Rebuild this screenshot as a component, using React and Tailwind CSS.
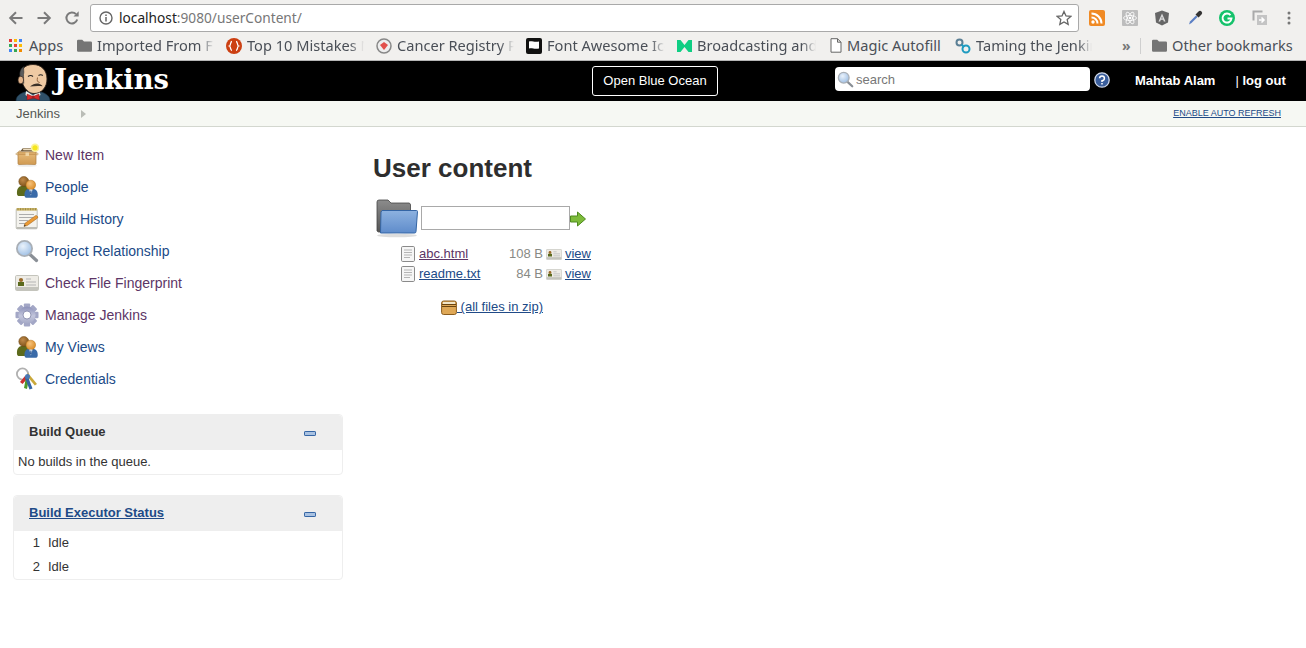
import React from "react";

const BLUE = "text-[#204a87]";
const PURPLE = "text-[#5c3566]";

function Back({ flip }) {
  return (
    <svg width="16" height="16" viewBox="0 0 16 16" className={flip ? "rotate-180" : ""}>
      <path d="M14.5 8H2.5M8 2.2L2.2 8 8 13.8" fill="none" stroke="#7a7a7a" strokeWidth="2" />
    </svg>
  );
}

function Reload() {
  return (
    <svg width="16" height="16" viewBox="0 0 16 16">
      <path d="M13.2 9.5A5.5 5.5 0 1 1 12 4.2" fill="none" stroke="#7a7a7a" strokeWidth="2" />
      <path d="M9.5 6.4h5.2V1.2z" fill="#7a7a7a" />
    </svg>
  );
}

function FolderMini() {
  return (
    <svg width="15" height="13" viewBox="0 0 15 13" className="shrink-0">
      <path d="M0 2a1.200 1.200 0 0 1 1.200-1.200h4L7 2.600h6.800A1.200 1.200 0 0 1 15 3.800v7.800a1.200 1.200 0 0 1-1.200 1.200H1.200A1.200 1.200 0 0 1 0 11.600z" fill="#757575" />
    </svg>
  );
}

function AppsGrid() {
  const c = ["#e53935", "#fbbc05", "#4285f4", "#34a853", "#ea4335", "#fbbc05", "#4285f4", "#34a853", "#f28b00"];
  return (
    <div className="grid grid-cols-3 gap-[2px] w-[13px] shrink-0">
      {c.map((x, i) => (
        <svg key={i} width="3" height="3" className="block"><rect width="3" height="3" fill={x} /></svg>
      ))}
    </div>
  );
}

function Bookmark({ icon, text, w, pr = "pr-[12px]" }) {
  return (
    <div className={`flex items-center shrink-0 gap-[5px] ${pr}`} style={{ width: w }}>
      {icon}
      <span className="whitespace-nowrap overflow-hidden [mask-image:linear-gradient(to_right,black_88%,transparent)] flex-1 min-w-0">{text}</span>
    </div>
  );
}

function BookmarkPlain({ icon, text, w, gap = "gap-[5px]" }) {
  return (
    <div className={`flex items-center shrink-0 ${gap}`} style={{ width: w }}>
      {icon}
      <span className="whitespace-nowrap">{text}</span>
    </div>
  );
}

function NewItemIcon() {
  return (
    <svg width="24" height="24" viewBox="0 0 24 24">
      <defs>
        <linearGradient id="boxg" x1="0" y1="0" x2="0" y2="1">
          <stop offset="0" stopColor="#e8bd7c" />
          <stop offset="1" stopColor="#d09a52" />
        </linearGradient>
      </defs>
      <path d="M5 8.500L8 5h9.500l2.500 3.500z" fill="#6d5a3c" />
      <path d="M.6 11L5 7.500l1.800 3-4.500 1.500zM23.400 11L19.500 7.500l-1.800 3 4.500 1.500z" fill="#f0d9ae" stroke="#b58f58" strokeWidth=".5" />
      <path d="M7.500 5.500h10l-1 1.800h-8z" fill="#ecdcc0" />
      <rect x="3" y="9" width="18" height="12.500" rx="1" fill="url(#boxg)" stroke="#ad7d3d" strokeWidth=".7" />
      <path d="M3.500 11.200h17" stroke="#bd8a47" strokeWidth=".9" />
      <rect x="10.500" y="9.500" width="3.500" height="3.500" fill="#eed4a4" />
      <ellipse cx="12" cy="22.800" rx="10" ry="1" fill="#ececec" />
      <circle cx="20" cy="4.800" r="4.300" fill="#fbf39b" />
      <circle cx="20" cy="4.800" r="2.600" fill="#f5e61f" />
    </svg>
  );
}

function PeopleIcon() {
  return (
    <svg width="24" height="24" viewBox="0 0 24 24">
      <defs>
        <radialGradient id="hb" cx=".4" cy=".35" r=".7">
          <stop offset="0" stopColor="#c08a4a" />
          <stop offset="1" stopColor="#7c5016" />
        </radialGradient>
        <radialGradient id="ho" cx=".4" cy=".35" r=".7">
          <stop offset="0" stopColor="#f6c27c" />
          <stop offset="1" stopColor="#d98a24" />
        </radialGradient>
      </defs>
      <path d="M2 19c-.500-5 1.500-8.500 7-8.500s7.500 3.500 7 8.500c-.200 1.500-1 2-2 2H4c-1 0-1.800-.500-2-2z" fill="#5c6a1c" />
      <circle cx="8.800" cy="6.500" r="5" fill="url(#hb)" stroke="#6b4412" strokeWidth=".5" />
      <path d="M9.500 20.500c-.300-4.500 1.800-7 6.500-7s7 2.500 6.700 7c-.100 1.500-1 2.300-2.200 2.300H11.700c-1.200 0-2.100-.800-2.200-2.300z" fill="#3a6ba8" />
      <circle cx="15.800" cy="10" r="4.800" fill="url(#ho)" stroke="#b87416" strokeWidth=".5" />
      <path d="M14.300 14.500h3.200l-1.600 6z" fill="#f2f4f8" />
      <path d="M15.400 15.500h1l.300 2.800-.800 1.500-.800-1.500z" fill="#2f5a94" />
    </svg>
  );
}

function HistoryIcon() {
  return (
    <svg width="24" height="24" viewBox="0 0 24 24">
      <rect x="1.200" y="1.800" width="21" height="20" rx="1" fill="#f4f3ee" stroke="#b0b0a8" strokeWidth=".8" />
      <rect x="1.500" y="20" width="20.500" height="2" fill="#bdbdb6" />
      <rect x="1.600" y="1" width="20.400" height="2.600" fill="#c9b467" />
      <path d="M3 1.200v2M5.500 1.200v2M8 1.200v2M10.500 1.200v2M13 1.200v2M15.500 1.200v2M18 1.200v2M20.500 1.200v2" stroke="#8a7a3e" strokeWidth=".7" />
      <path d="M4 7.500h15M4 10.500h15M4 13.500h9M4 16.500h6" stroke="#a4a4a4" strokeWidth=".9" />
      <path d="M9 19.500l1-3.200L20.500 8.700c1-.700 2.800 1 2.200 2.200L12.300 18.500z" fill="#eb9a34" stroke="#9a5f18" strokeWidth=".5" />
      <path d="M9 19.500l.600-1.900 1.200 1.200z" fill="#333" />
    </svg>
  );
}

function SearchIcon({ size = 24 }) {
  return (
    <svg width={size} height={size} viewBox="0 0 24 24">
      <defs>
        <radialGradient id="lens" cx=".4" cy=".35" r=".8">
          <stop offset="0" stopColor="#eaf2fb" />
          <stop offset="1" stopColor="#8fb5e0" />
        </radialGradient>
      </defs>
      <path d="M14.500 15l7 6.500" stroke="#8a8f96" strokeWidth="3.200" strokeLinecap="round" />
      <circle cx="9.500" cy="9.500" r="7.600" fill="url(#lens)" stroke="#a9afb6" strokeWidth="1.800" />
    </svg>
  );
}

function CardIcon({ w = 24, h = 16 }) {
  return (
    <svg width={w} height={h} viewBox="0 0 24 16">
      <rect x=".5" y=".5" width="23" height="15" rx="1.200" fill="#eeece6" stroke="#c4c4bc" />
      <rect x="1" y="12" width="22" height="3" fill="#c4c4bd" />
      <circle cx="6" cy="5" r="2.100" fill="#9a6a2a" />
      <rect x="3" y="7" width="6" height="4" fill="#5b6a1e" />
      <path d="M11 4h5M11 7h10M11 10h10" stroke="#b4b4b4" />
    </svg>
  );
}

function GearIcon() {
  const teeth = [0, 45, 90, 135, 180, 225, 270, 315];
  return (
    <svg width="26" height="26" viewBox="0 0 24 24">
      <defs>
        <linearGradient id="gear" x1="0" y1="0" x2="0" y2="1">
          <stop offset="0" stopColor="#8a8fb8" />
          <stop offset=".55" stopColor="#c3c6dc" />
          <stop offset="1" stopColor="#a5a9c6" />
        </linearGradient>
      </defs>
      {teeth.map((a) => (
        <rect key={a} x="8.800" y="0.500" width="6.400" height="6" rx="1" fill="#a3a7c6" transform={`rotate(${a} 12 12)`} />
      ))}
      <circle cx="12" cy="12" r="8.600" fill="url(#gear)" />
      <circle cx="12" cy="12" r="4" fill="#fff" stroke="#7d82a6" strokeWidth=".8" />
    </svg>
  );
}

function KeysIcon() {
  return (
    <svg width="24" height="24" viewBox="0 0 24 24">
      <circle cx="7.500" cy="7" r="5.600" fill="none" stroke="#b0b0b0" strokeWidth="1.800" />
      <path d="M13 6l9 11-2.200 1.600-8.300-10z" fill="#c9a83a" />
      <path d="M10 9l-5 6 2.500 2 5-5.500z" fill="#cc2f2f" />
      <path d="M11 10l-2 11 3 1 2-11z" fill="#4d9a2a" />
      <path d="M12.500 8.500l5 13-3 1-4.800-12.500z" fill="#3465a4" />
      <circle cx="12.500" cy="9.500" r="2.500" fill="#4a78b4" />
    </svg>
  );
}

function DocIcon() {
  return (
    <svg width="14" height="16" viewBox="0 0 14 16">
      <rect x=".5" y=".5" width="13" height="15" rx="1.200" fill="#f6f6f6" stroke="#8a8a8a" />
      <path d="M3 4h8M3 6.500h8M3 9h8M3 11.500h6" stroke="#b4b4b4" />
    </svg>
  );
}

function MinusBtn() {
  return (
    <svg width="12" height="5" viewBox="0 0 12 5" className="mt-[4px]">
      <rect x=".5" y=".5" width="11" height="4" rx=".6" fill="#a9c2e2" stroke="#3465a4" />
    </svg>
  );
}

function Butler() {
  return (
    <svg width="38" height="39" viewBox="0 0 38 39" className="shrink-0 self-end">
      <path d="M2 39c0-5 4-7.500 9-9l8-1.500 8 1.500c5 1.500 9 4 9 9z" fill="#2f5068" stroke="#182f40" strokeWidth=".6" />
      <path d="M12 29l7 4.500 6.500-4.500 1 4-7.500 5-7.500-5z" fill="#f2f2ee" />
      <path d="M7.500 19C4 8 11 2.500 19 2.500S33 8 33 17c0 8-5 14.500-13 14.500-5.500 0-9.500-4.500-12.500-12.500z" fill="#efcaa3" stroke="#2b2018" strokeWidth=".9" />
      <path d="M7.500 20C4.500 12 5.500 7 10 4.500c-1 3 .500 5-.500 8 0 3 .200 5.500.300 9z" fill="#5b5b5b" stroke="#222" strokeWidth=".5" />
      <ellipse cx="6.800" cy="18" rx="2.800" ry="3.800" fill="#e3b58c" stroke="#2b2018" strokeWidth=".7" />
      <path d="M14 14.500c1.800-1.300 3.500-1.300 5 0M24.500 13.500c1.500-1 3-1 4.300 0" fill="none" stroke="#222" strokeWidth="1.100" />
      <path d="M23.500 15.500c-.500 3-.500 4.500 2.200 5" fill="none" stroke="#8c5c36" strokeWidth=".9" />
      <path d="M16 24.500c3-2.800 7-3.500 9.500-2.600 1.500.500 2.500 1.300 3 2.300-3-.500-8-.400-12.500.300z" fill="#3b3128" />
      <path d="M14 34l5 1.800 5-1.800 1 1.500v3.500H13v-3.500z" fill="#2f5068" />
      <path d="M13 32l6 2.500 6-2.500.500 6-6-2-.500.200-6 1.800z" fill="#d8282a" stroke="#701012" strokeWidth=".4" />
      <circle cx="19.200" cy="35" r="1.500" fill="#a81c1e" />
    </svg>
  );
}

const NAV = [
  [NewItemIcon, "New Item", PURPLE],
  [PeopleIcon, "People", BLUE],
  [HistoryIcon, "Build History", BLUE],
  [SearchIcon, "Project Relationship", BLUE],
  [() => <CardIcon />, "Check File Fingerprint", PURPLE],
  [GearIcon, "Manage Jenkins", PURPLE],
  [PeopleIcon, "My Views", BLUE],
  [KeysIcon, "Credentials", BLUE],
];

function Panel({ title, link, children, mt }) {
  return (
    <div className={`w-[330px] rounded-[4px] border border-[#eeeeee] ${mt}`}>
      <div className="h-[35px] bg-[#eeeeee] flex items-center justify-between pl-[15px] pr-[26px] pb-[2px] rounded-t-[4px]">
        <span className={`font-bold text-[13px] ${link ? BLUE + " underline" : "text-[#333]"}`}>{title}</span>
        <MinusBtn />
      </div>
      {children}
    </div>
  );
}

export default function App() {
  return (
    <div className="w-[1306px] h-[648px] overflow-hidden bg-white font-['Liberation_Sans',sans-serif] text-[#333] flex flex-col">
      {/* browser toolbar */}
      <div className="h-[32px] pt-[4px] bg-[#f1f0ee] flex items-center pl-[8px] shrink-0">
        <div className="flex items-center gap-[12px] w-[82px]">
          <Back />
          <Back flip />
          <Reload />
        </div>
        <div className="w-[989px] h-[28px] bg-white border border-[#a9a9a9] rounded-[3px] flex items-center pl-[8px] pr-[6px] justify-between font-['Noto_Sans',sans-serif] text-[13.700px]">
          <div className="flex items-center gap-[6px]">
            <svg width="14" height="14" viewBox="0 0 14 14">
              <circle cx="7" cy="7" r="6" fill="none" stroke="#666" strokeWidth="1.400" />
              <path d="M7 6v4.400M7 3.400v1.500" stroke="#666" strokeWidth="1.500" />
            </svg>
            <span className="text-[#222]">localhost<span className="text-[#777]">:9080/userContent/</span></span>
          </div>
          <svg width="16" height="16" viewBox="0 0 16 16">
            <path d="M8 1.400l2 4.500 4.800.5-3.600 3.200 1 4.800L8 12l-4.200 2.400 1-4.800L1.200 6.400l4.800-.5z" fill="none" stroke="#666" strokeWidth="1.300" />
          </svg>
        </div>
        <div className="flex items-center ml-[10px] gap-[16.500px]">
          <svg width="16" height="16" viewBox="0 0 16 16">
            <rect width="16" height="16" rx="2" fill="#f08a24" />
            <circle cx="4" cy="12" r="1.700" fill="#fff" />
            <path d="M2.500 7.500a6 6 0 0 1 6 6M2.500 3.500a10 10 0 0 1 10 10" fill="none" stroke="#fff" strokeWidth="2" />
          </svg>
          <svg width="16" height="16" viewBox="0 0 16 16">
            <rect width="16" height="16" rx="1" fill="#bdbdbd" />
            <g fill="none" stroke="#fff" strokeWidth=".8">
              <ellipse cx="8" cy="8" rx="6.500" ry="2.500" />
              <ellipse cx="8" cy="8" rx="6.500" ry="2.500" transform="rotate(60 8 8)" />
              <ellipse cx="8" cy="8" rx="6.500" ry="2.500" transform="rotate(120 8 8)" />
            </g>
            <circle cx="8" cy="8" r="1.300" fill="#fff" />
          </svg>
          <svg width="16" height="16" viewBox="0 0 16 16">
            <path d="M8 .5l7 2.500-1 9.500L8 15.500 2 12.500 1 3z" fill="#666" />
            <path d="M8 3.500L4.500 11.500h1.700l.6-1.700h2.400l.6 1.700h1.700zM7.300 8.500L8 6.500l.7 2z" fill="#ddd" fillRule="evenodd" />
          </svg>
          <svg width="16" height="16" viewBox="0 0 16 16">
            <path d="M2 14.500l1-3L9 5.500l1.500 1.500-6 6z" fill="#5a7fc4" />
            <path d="M8.500 4.500l3-3a1.800 1.800 0 0 1 3 3l-3 3z" fill="#333" />
          </svg>
          <svg width="16" height="16" viewBox="0 0 16 16">
            <circle cx="8" cy="8" r="8" fill="#15c26b" />
            <path d="M11.500 5.200A4.500 4.500 0 1 0 12.500 8.500H8.500" fill="none" stroke="#fff" strokeWidth="1.900" />
          </svg>
          <svg width="16" height="16" viewBox="0 0 16 16">
            <path d="M1.500 10.500v-9h9" fill="none" stroke="#aaa" strokeWidth="2" />
            <path d="M5 5h10v10H5z" fill="#c4c4c4" />
            <path d="M7 10h4M9.500 7.500L12 10l-2.500 2.500" fill="none" stroke="#fff" strokeWidth="1.500" />
          </svg>
          <svg width="4" height="14" viewBox="0 0 4 14" className="ml-[3px]">
            <circle cx="2" cy="2" r="1.500" fill="#777" />
            <circle cx="2" cy="7" r="1.500" fill="#777" />
            <circle cx="2" cy="12" r="1.500" fill="#777" />
          </svg>
        </div>
      </div>

      {/* bookmarks bar */}
      <div className="h-[29px] bg-[#f1f0ee] border-b border-[#b5b5b5] flex items-center pl-[9px] shrink-0 font-['Noto_Sans',sans-serif] text-[14.600px] text-[#4a4f57]">
        <BookmarkPlain icon={<AppsGrid />} text="Apps" w={68} gap="gap-[7px]" />
        <Bookmark icon={<FolderMini />} text="Imported From Firefox" w={149} />
        <Bookmark
          icon={
            <svg width="16" height="16" viewBox="0 0 16 16" className="shrink-0">
              <circle cx="8" cy="8" r="8" fill="#cc3f11" />
              <path d="M6 3.500c-2 0-1 4-2.500 4.500C5 8.500 4 12.500 6 12.500M10 3.500c2 0 1 4 2.500 4.500-1.500.5-.5 4.500-2.500 4.500" fill="none" stroke="#fff" strokeWidth="1.300" />
            </svg>
          }
          text="Top 10 Mistakes Node"
          w={150}
        />
        <Bookmark
          icon={
            <svg width="16" height="16" viewBox="0 0 16 16" className="shrink-0">
              <circle cx="8" cy="8" r="7" fill="#eee" stroke="#888" strokeWidth="1.500" />
              <path d="M4 7l4-3 4 3-4 5z" fill="#e2504c" />
            </svg>
          }
          text="Cancer Registry Project"
          w={150}
        />
        <Bookmark
          icon={
            <svg width="16" height="16" viewBox="0 0 16 16" className="shrink-0">
              <rect width="16" height="16" rx="2" fill="#111" />
              <path d="M3 3.500c3-1 5 1 10 0v7c-5 1-7-1-10 0z" fill="#fff" />
            </svg>
          }
          text="Font Awesome Icons"
          w={151}
        />
        <Bookmark
          icon={
            <svg width="15" height="12" viewBox="0 0 15 12" className="shrink-0">
              <path d="M0 0h3.500L7.500 5 11.500 0H15v12h-3.500L7.500 7 3.500 12H0z" fill="#0fce83" />
            </svg>
          }
          text="Broadcasting and more"
          w={151}
        />
        <BookmarkPlain
          icon={
            <svg width="12" height="15" viewBox="0 0 12 15" className="shrink-0 ml-[2px]">
              <path d="M1 .7h6.500l3.500 3.500v10H1zM7.500.7v3.500H11" fill="#fff" stroke="#666" />
            </svg>
          }
          text="Magic Autofill"
          w={127}
        />
        <Bookmark
          icon={
            <svg width="16" height="16" viewBox="0 0 16 16" className="shrink-0">
              <circle cx="4.500" cy="4.500" r="3" fill="none" stroke="#5b7f95" strokeWidth="2" />
              <circle cx="11" cy="11" r="3.500" fill="none" stroke="#1f9bc0" strokeWidth="2" />
              <path d="M6.500 6.500L9 9" stroke="#1f9bc0" strokeWidth="2" />
            </svg>
          }
          text="Taming the Jenkins"
          w={140}
          pr="pr-[3px]"
        />
        <span className="ml-[27px] text-[#777] text-[14px] font-bold w-[9px] leading-none">»</span>
        <div className="w-px h-[16px] bg-[#cfcfcf] ml-[9px] mr-[11px]" />
        <BookmarkPlain icon={<FolderMini />} text="Other bookmarks" w={140} />
      </div>

      {/* jenkins header */}
      <div className="h-[40px] bg-black flex items-center shrink-0 relative">
        <div className="w-[592px] flex items-center pl-[14px] h-full shrink-0">
          <Butler />
          <span className="ml-[2px] mb-[3px] text-white font-['DejaVu_Serif',serif] font-bold text-[27.400px] leading-none">Jenkins</span>
        </div>
        <div className="w-[126px] h-[30px] shrink-0 rounded-[3px] border border-white text-white text-[13px] flex items-center justify-center">Open Blue Ocean</div>
        <div className="ml-[117px] mb-[4px] w-[255px] h-[24px] bg-white rounded-[4px] flex items-center pl-[2px] text-[13px] text-[#777] shrink-0">
          <SearchIcon size={17} />
          <span className="ml-[2px] mt-[1px]">search</span>
        </div>
        <svg width="16" height="16" viewBox="0 0 16 16" className="ml-[4px] mb-[2px] shrink-0">
          <circle cx="8" cy="8" r="7.200" fill="#3a5e9c" stroke="#cfd8ea" strokeWidth="1.300" />
          <path d="M5.600 6.200A2.400 2.400 0 1 1 8 8.700v1.200M8 11v1.500" fill="none" stroke="#fff" strokeWidth="1.500" />
        </svg>
        <span className="ml-[25px] text-white font-bold text-[13px] whitespace-nowrap">Mahtab Alam</span>
        <span className="ml-[20px] text-white font-bold text-[13px] whitespace-nowrap"><span className="font-normal">|</span> log out</span>
      </div>

      {/* breadcrumb */}
      <div className="h-[26px] bg-[#f6f8f3] border-b border-[#d3d7cf] flex items-center pl-[16px] pr-[25px] shrink-0">
        <span className="text-[13px] text-[#555753]">Jenkins</span>
        <svg width="5" height="8" viewBox="0 0 5 8" className="ml-[21px]">
          <path d="M0 0l5 4-5 4z" fill="#babdb6" />
        </svg>
        <span className="ml-auto text-[9px] underline text-[#204a87]">ENABLE AUTO REFRESH</span>
      </div>

      {/* body */}
      <div className="flex flex-1">
        <div className="w-[373px] shrink-0 pl-[13px] pt-[12px]">
          <div className="flex flex-col">
            {NAV.map(([Icon, label, color]) => (
              <div key={label} className="h-[32px] flex items-center pl-[2px]">
                <div className="w-[24px] h-[24px] flex items-center justify-center shrink-0"><Icon /></div>
                <span className={`ml-[6px] text-[14px] ${color}`}>{label}</span>
              </div>
            ))}
          </div>
          <Panel title="Build Queue" mt="mt-[19px]">
            <div className="h-[24px] flex items-center pl-[4px] text-[13px]">No builds in the queue.</div>
          </Panel>
          <Panel title="Build Executor Status" link mt="mt-[20px]">
            <div className="h-[48px]">
              {[1, 2].map((n) => (
                <div key={n} className="h-[24px] flex items-center text-[13px]">
                  <span className="w-[26px] text-right">{n}</span>
                  <span className="ml-[8px]">Idle</span>
                </div>
              ))}
            </div>
          </Panel>
        </div>

        <div className="flex-1 pt-[26px]">
          <h1 className="text-[26px] font-bold leading-[30px] text-[#2e2e2e]">User content</h1>
          <div className="flex items-center mt-[15px] pl-[3px] h-[40px]">
            <svg width="42" height="40" viewBox="0 0 42 40" className="shrink-0">
              <defs>
                <linearGradient id="fback" x1="0" y1="0" x2="0" y2="1">
                  <stop offset="0" stopColor="#8c8c8c" />
                  <stop offset="1" stopColor="#555" />
                </linearGradient>
                <linearGradient id="ffront" x1="0" y1="0" x2="0" y2="1">
                  <stop offset="0" stopColor="#8db2e0" />
                  <stop offset="1" stopColor="#5f8ccb" />
                </linearGradient>
              </defs>
              <path d="M1 4a2 2 0 0 1 2-2h9l3 3h18a2 2 0 0 1 1.500 2v6H7L6 34H2.500L1 33z" fill="url(#fback)" stroke="#444" strokeWidth=".8" />
              <path d="M6 12.500h34.500a1 1 0 0 1 1 1L40 33.500a1.500 1.500 0 0 1-1.500 1.500H4.500L5 14z" fill="url(#ffront)" stroke="#3465a4" />
              <ellipse cx="21" cy="37.500" rx="20" ry="1.800" fill="#dddddd" />
            </svg>
            <div className="ml-[3px] w-[149px] h-[24px] bg-white border border-[#a9a9a9] shrink-0" />
            <svg width="16" height="16" viewBox="0 0 16 16" className="shrink-0 mt-[2px]">
              <path d="M.5 5h7V1L15.500 8 7.500 15v-4h-7z" fill="#7dbb3a" stroke="#4e8a1e" />
            </svg>
          </div>
          <div className="mt-[6px] w-[218px] text-[13px]">
            {[
              ["abc.html", "108 B", PURPLE],
              ["readme.txt", "84 B", BLUE],
            ].map(([name, size, color]) => (
              <div key={name} className="h-[20px] flex items-center pl-[28px]">
                <DocIcon />
                <span className={`ml-[4px] underline ${color}`}>{name}</span>
                <span className="ml-auto text-[#888a85]">{size}</span>
                <span className="ml-[3px] flex"><CardIcon w={16} h={11} /></span>
                <span className={`ml-[3px] underline ${BLUE}`}>view</span>
              </div>
            ))}
          </div>
          <div className="mt-[13px] pl-[68px] flex items-center h-[20px] text-[13px]">
            <svg width="16" height="15" viewBox="0 0 16 15" className="shrink-0">
              <rect x=".6" y="1" width="14.800" height="13.500" rx="2" fill="#dfa856" stroke="#8a5c1e" />
              <path d="M1 4.500h14M1 6.500h14" stroke="#6b4510" />
              <rect x="2" y="2" width="12" height="2" fill="#f2e6c9" />
            </svg>
            <span className={`underline whitespace-pre ${BLUE}`}> (all files in zip)</span>
          </div>
        </div>
      </div>
    </div>
  );
}
